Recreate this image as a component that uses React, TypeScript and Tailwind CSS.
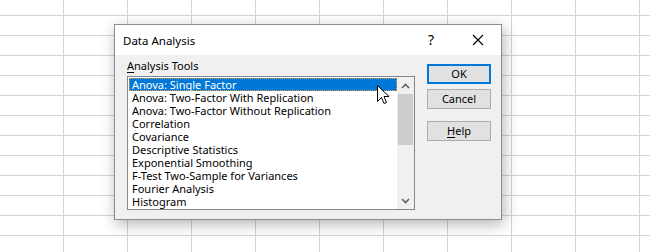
import React from "react";

const items = [
  "Anova: Single Factor",
  "Anova: Two-Factor With Replication",
  "Anova: Two-Factor Without Replication",
  "Correlation",
  "Covariance",
  "Descriptive Statistics",
  "Exponential Smoothing",
  "F-Test Two-Sample for Variances",
  "Fourier Analysis",
  "Histogram",
];

export default function App() {
  return (
    <div
      className="relative w-[650px] h-[252px] overflow-hidden bg-white bg-[linear-gradient(to_right,#d4d4d4_1px,transparent_1px),linear-gradient(to_bottom,#d4d4d4_1px,transparent_1px)] bg-[size:64px_20px] bg-[position:63px_15px]"
      style={{ fontFamily: '"Noto Sans", "Open Sans", sans-serif' }}
    >
      <div className="absolute left-[114px] top-[24px] w-[388px] h-[196px] border border-[#8c8c8c] bg-[#f0f0f0] shadow-[2px_4px_14px_rgba(0,0,0,0.3)] flex flex-col text-[11px] text-black">
        {/* title bar */}
        <div className="h-[30px] bg-white flex items-center pl-[8px] shrink-0">
          <span className="flex-1 text-[11.5px] leading-[14px] pt-[1px]">Data Analysis</span>
          <span className="w-[14px] text-center text-[14px] leading-none mr-[34px]">?</span>
          <svg width="12" height="12" viewBox="0 0 12 12" className="mr-[17px]">
            <path d="M1 1 L11 11 M11 1 L1 11" stroke="#000" strokeWidth="1.1" />
          </svg>
        </div>
        {/* body */}
        <div className="flex-1 flex pl-[12px]">
          <div className="flex flex-col pt-[3px]">
            <div className="leading-[14px] h-[14px] pt-[1px]">
              <span className="underline underline-offset-2">A</span>nalysis Tools
            </div>
            <div className="mt-[4px] w-[288px] h-[134px] border border-[#828790] bg-white flex">
              <div className="flex-1 pl-[1px] pt-[1px] flex flex-col">
                {items.map((t, i) => (
                  <div
                    key={t}
                    className={
                      i === 0
                        ? "h-[13px] leading-[11px] pl-[2px] bg-[#0078d7] text-white border border-dotted border-[#f5a040] whitespace-nowrap"
                        : "h-[13px] leading-[13px] pl-[3px] whitespace-nowrap"
                    }
                  >
                    {t}
                  </div>
                ))}
              </div>
              <div className="w-[17px] bg-[#f0f0f0] flex flex-col items-center">
                <div className="h-[17px] w-full flex items-center justify-center">
                  <svg width="9" height="6" viewBox="0 0 9 6">
                    <path d="M1 5 L4.5 1.5 L8 5" stroke="#606060" strokeWidth="1.6" fill="none" />
                  </svg>
                </div>
                <div className="w-[15px] h-[51px] bg-[#cdcdcd]" />
                <div className="flex-1" />
                <div className="h-[17px] w-full flex items-center justify-center">
                  <svg width="9" height="6" viewBox="0 0 9 6">
                    <path d="M1 1 L4.5 4.5 L8 1" stroke="#606060" strokeWidth="1.6" fill="none" />
                  </svg>
                </div>
              </div>
            </div>
          </div>
          <div className="ml-[12px] pt-[9px] flex flex-col">
            <div className="w-[64px] h-[20px] border-2 border-[#0078d7] bg-[#e1e1e1] flex items-center justify-center">
              OK
            </div>
            <div className="mt-[5px] w-[64px] h-[20px] border border-[#adadad] bg-[#e1e1e1] flex items-center justify-center">
              Cancel
            </div>
            <div className="mt-[12px] w-[64px] h-[20px] border border-[#adadad] bg-[#e1e1e1] flex items-center justify-center">
              <span>
                <span className="underline underline-offset-2">H</span>elp
              </span>
            </div>
          </div>
        </div>
      </div>
      {/* mouse cursor */}
      <svg
        className="absolute left-[377px] top-[85px]"
        width="13"
        height="20"
        viewBox="0 0 13 20"
      >
        <path
          d="M0.5 0.5 L0.5 16.5 L4.5 12.5 L7 18.5 L9.5 17.5 L7 11.5 L12 11.5 Z"
          fill="#fff"
          stroke="#000"
          strokeWidth="1"
          strokeLinejoin="miter"
        />
      </svg>
    </div>
  );
}
